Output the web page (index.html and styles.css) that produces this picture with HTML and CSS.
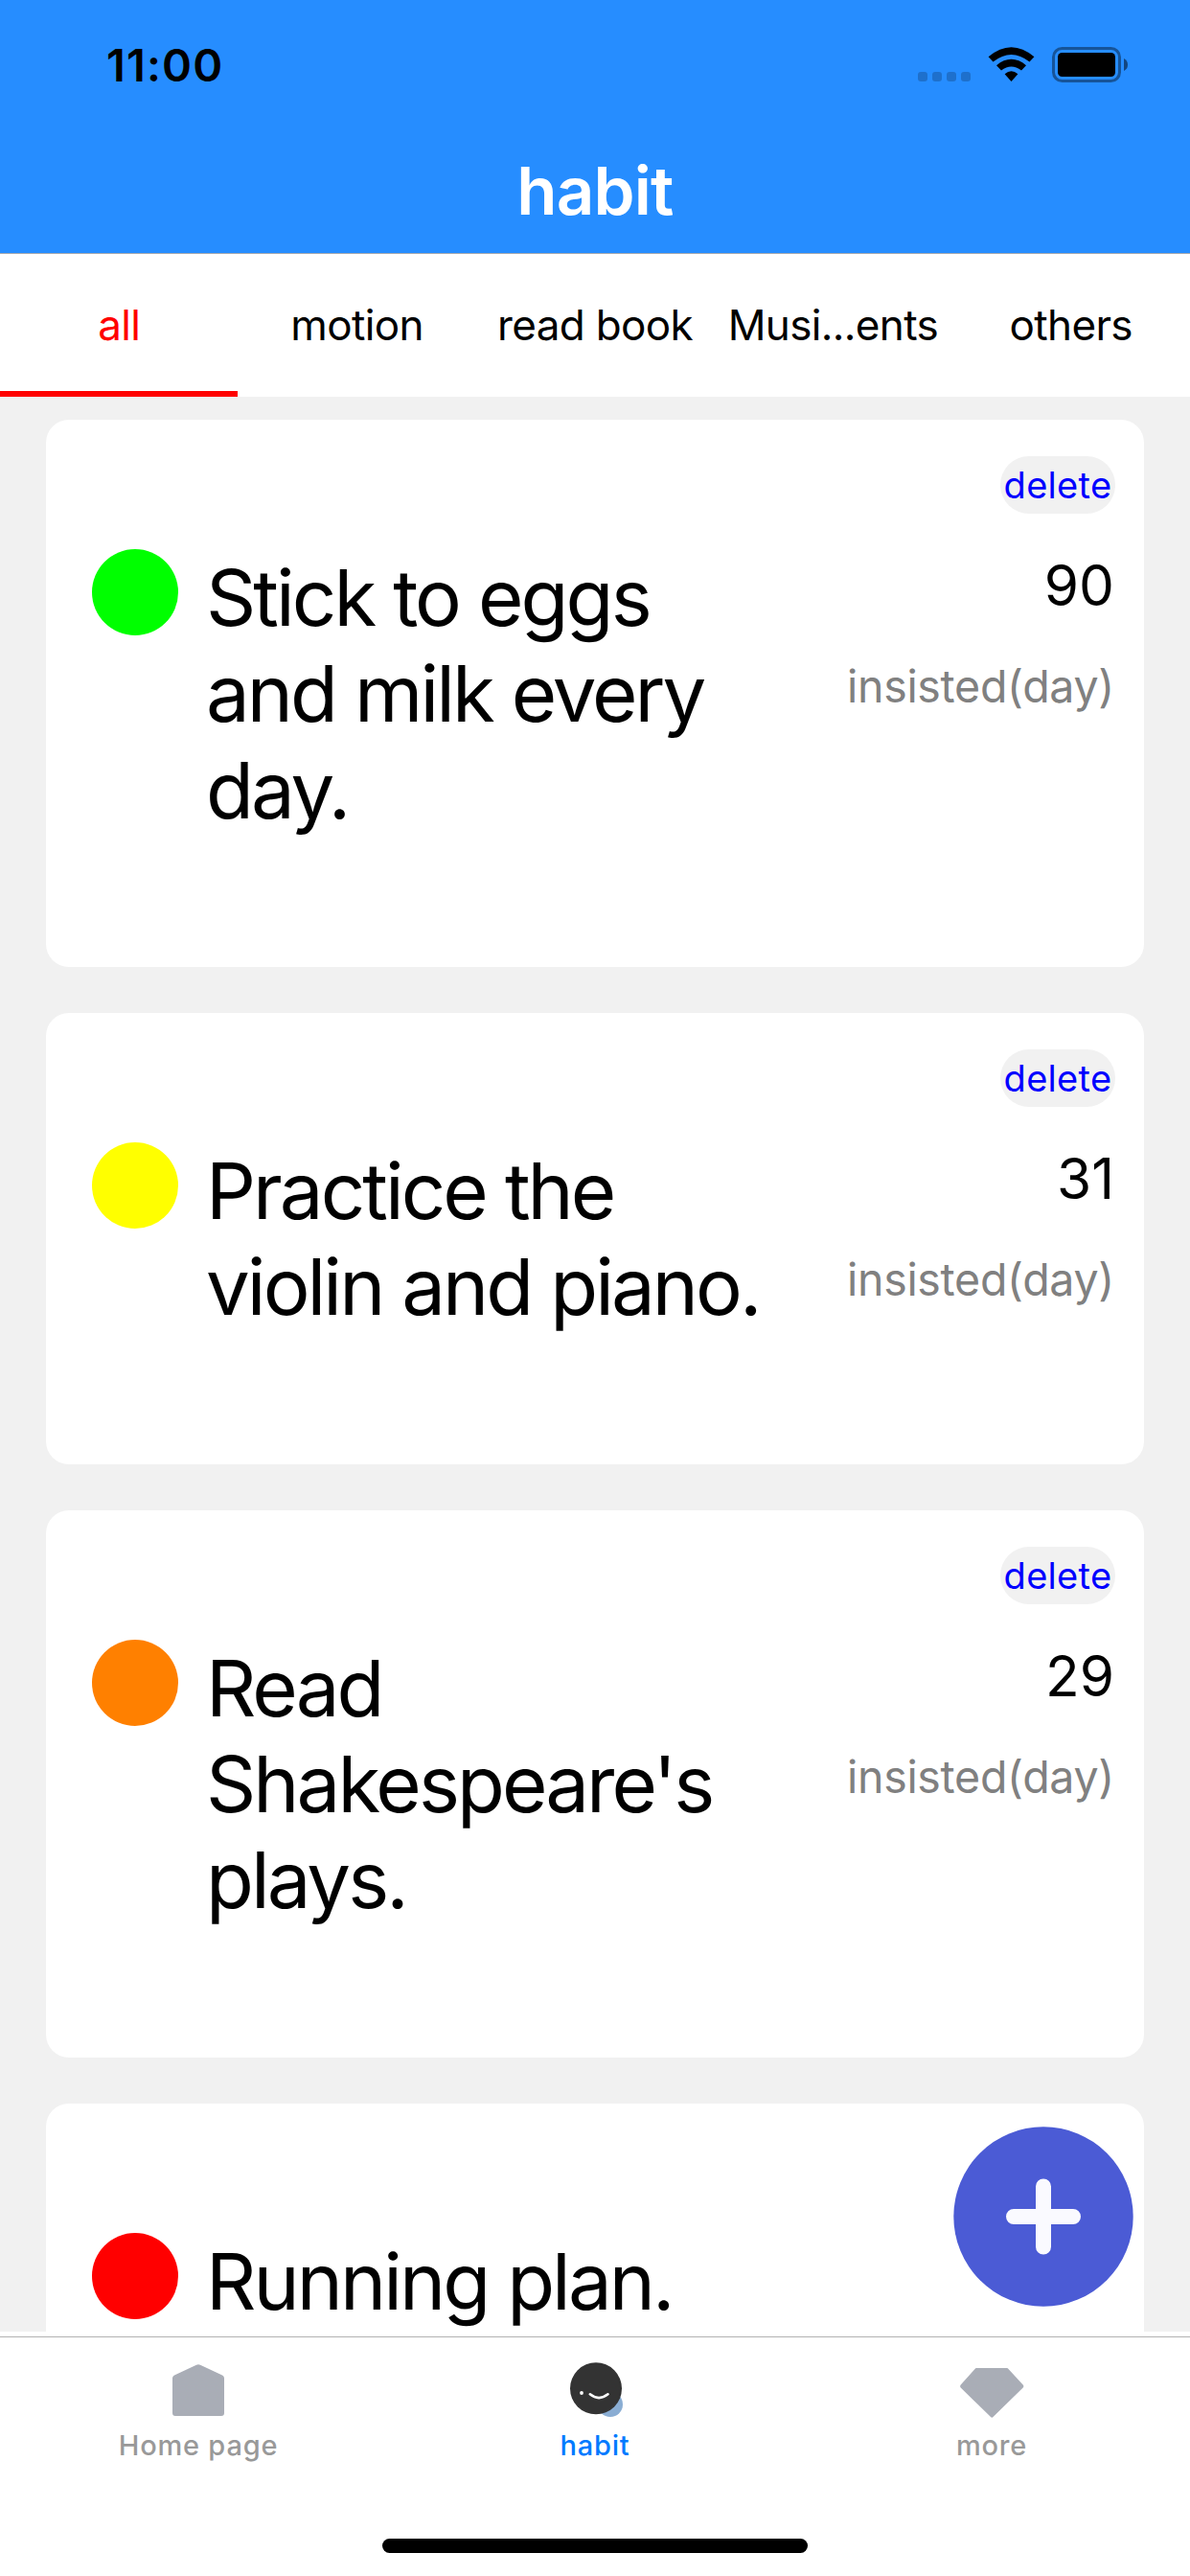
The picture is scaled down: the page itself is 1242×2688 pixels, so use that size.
FILE: index.html
```html
<!DOCTYPE html>
<html lang="en">
<head>
<meta charset="utf-8">
<title>habit</title>
<link rel="stylesheet" href="styles.css">
</head>
<body>
<div class="app">
  <header class="header">
    <div class="status">
      <span class="clock">11:00</span>
      <svg class="status-icons" width="220" height="40" viewBox="958 48 220 40">
        <g fill="#000" fill-opacity=".2">
          <rect x="958" y="75" width="10" height="10" rx="3"/>
          <rect x="973" y="75" width="10" height="10" rx="3"/>
          <rect x="988" y="75" width="10" height="10" rx="3"/>
          <rect x="1003" y="75" width="10" height="10" rx="3"/>
        </g>
        <path d="M1031.6 59.3Q1055.5 39.300 1079.400 59.300L1074.500 64.500Q1055.500 49.300 1036.500 64.500Z"/>
        <path d="M1040 68.200Q1055.500 55.500 1071 68.200L1066 73.500Q1055.500 65.500 1045 73.500Z"/>
        <path d="M1048.600 77.200Q1055.500 71.500 1062.400 77.200L1055.500 85Z"/>
        <rect x="1099.500" y="50.500" width="69" height="34" rx="9" fill="none" stroke="#000" stroke-opacity=".4" stroke-width="3"/>
        <rect x="1104" y="55" width="60" height="25" rx="4.500"/>
        <path d="M1173 61Q1177 63 1177 67.500T1173 74Z" fill-opacity=".5"/>
      </svg>
    </div>
    <h1 class="title">habit</h1>
  </header>
  <nav class="tabs">
    <span class="tab tab-active">all</span>
    <span class="tab">motion</span>
    <span class="tab">read book</span>
    <span class="tab">Musi...ents</span>
    <span class="tab">others</span>
  </nav>
  <main class="list">
    <article class="card">
      <i class="dot green"></i>
      <p class="name">Stick to eggs and milk every day.</p>
      <div class="side"><button class="delete">delete</button><span class="days">90</span><span class="unit">insisted(day)</span></div>
    </article>
    <article class="card">
      <i class="dot yellow"></i>
      <p class="name">Practice the violin and piano.</p>
      <div class="side"><button class="delete">delete</button><span class="days">31</span><span class="unit">insisted(day)</span></div>
    </article>
    <article class="card">
      <i class="dot orange"></i>
      <p class="name">Read Shakespeare's plays.</p>
      <div class="side"><button class="delete">delete</button><span class="days">29</span><span class="unit">insisted(day)</span></div>
    </article>
    <article class="card">
      <i class="dot red"></i>
      <p class="name">Running plan.</p>
    </article>
  </main>
  <svg class="add" width="188" height="188" viewBox="0 0 188 188">
    <circle cx="94" cy="94" r="93.700" fill="#4b5bd5"/>
    <path d="M94 62.500V125.500M63 94H125" stroke="#fafaff" stroke-width="16" stroke-linecap="round"/>
  </svg>
  <footer class="tabbar">
    <div class="items">
      <div class="item">
        <svg width="70" height="60" viewBox="0 0 70 60"><path d="M8 17.500Q8 15.500 10 14.500L33 3.800Q35 2.800 37 3.800L60 14.500Q62 15.500 62 17.500V54Q62 57 59 57H11Q8 57 8 54Z" fill="#a9adb6"/></svg>
        <span>Home page</span>
      </div>
      <div class="item item-active">
        <svg width="70" height="60" viewBox="586 2464 70 60">
          <circle cx="637" cy="2509" r="13" fill="#8aadd3"/>
          <circle cx="622" cy="2492.300" r="27" fill="#333"/>
          <circle cx="607" cy="2497" r="1.900" fill="#fff"/>
          <path d="M615.800 2498.300Q625 2505.800 634.500 2498.300" fill="none" stroke="#fff" stroke-width="2.600" stroke-linecap="round"/>
        </svg>
        <span>habit</span>
      </div>
      <div class="item">
        <svg width="70" height="60" viewBox="1000 2464 70 60"><path d="M1019 2471H1051Q1051.800 2471 1052.500 2472L1067.700 2488.500Q1069 2490 1067.700 2491.500L1036.500 2522Q1035.300 2523.500 1034 2522L1002.700 2491.500Q1001.500 2490 1002.700 2488.500L1017.500 2472Q1018.200 2471 1019 2471Z" fill="#a9adb6"/></svg>
        <span>more</span>
      </div>
    </div>
    <div class="home-bar"></div>
  </footer>
</div>
</body>
</html>
```

FILE: styles.css
```css
* { box-sizing: border-box; }
body { margin: 0; font-family: Inter, "Liberation Sans", sans-serif; color: #000; }
.app { position: relative; display: flex; flex-direction: column; width: 1242px; height: 2688px; overflow: hidden; background: #fff; }

.header { flex: none; height: 265px; background: #268dff; border-bottom: 1px solid #a6a9b0; }
.status { display: flex; justify-content: space-between; height: 134px; padding: 48px 64px 0 111px; }
.clock { font-size: 47px; font-weight: 600; line-height: 40px; letter-spacing: 1.1px; }
.status-icons { flex: none; }
.title { margin: 0; text-align: center; color: #fff; font-size: 69px; font-weight: 600; line-height: 130px; letter-spacing: -0.8px; }

.tabs { flex: none; display: grid; grid-template-columns: repeat(5, 1fr); height: 149px; }
.tab { text-align: center; font-size: 44px; line-height: 138px; padding-top: 5px; border-bottom: 6px solid transparent; letter-spacing: -0.65px; white-space: nowrap; }
.tab-active { color: #f00; border-color: #f00; }

.list { flex: none; height: 2019px; overflow: hidden; padding: 24px 48px 0; background: #f1f1f1; display: flex; flex-direction: column; gap: 48px; }
.card { flex: none; display: flex; align-items: flex-start; padding: 0 30px 134px 48px; border-radius: 24px; background: #fff; }
.dot { flex: none; width: 90px; height: 90px; margin: 135px 29px 0 0; border-radius: 50%; }
.green { background: #0f0; }
.yellow { background: #ff0; }
.orange { background: #ff8000; }
.red { background: #f00; }
.name { flex: none; width: 610px; margin: 136px 0 0; font-size: 81.5px; line-height: 100.33px; letter-spacing: -2.95px; }
.side { flex: 1; height: 300px; display: flex; flex-direction: column; align-items: flex-end; white-space: nowrap; padding-top: 38px; }
.delete { width: 120px; height: 60px; padding: 0; border: 0; border-radius: 30px; background: #f1f1f1; color: #00f; font: 38px/60px Inter, sans-serif; letter-spacing: 0.3px; }
.days { margin-top: 45px; font-size: 58.5px; line-height: 60px; padding-right: 1px; }
.unit { margin-top: 45px; font-size: 46.5px; line-height: 60px; color: #808080; padding-right: 1px; letter-spacing: -0.3px; }

.add { position: absolute; left: 994.5px; top: 2218.5px; }

.tabbar { flex: 1; padding-top: 5px; background: #fff; }
.items { display: grid; grid-template-columns: repeat(3, 414px); height: 211px; padding-top: 25px; border-top: 1px solid #b2b2b2; }
.item { display: flex; flex-direction: column; align-items: center; color: #999; font-size: 29px; font-weight: 500; line-height: 36px; letter-spacing: 0.8px; gap: 10px; }
.item-active { color: #007aff; }
.home-bar { width: 444px; height: 15px; margin: 0 auto; border-radius: 8px; background: #000; }
```
